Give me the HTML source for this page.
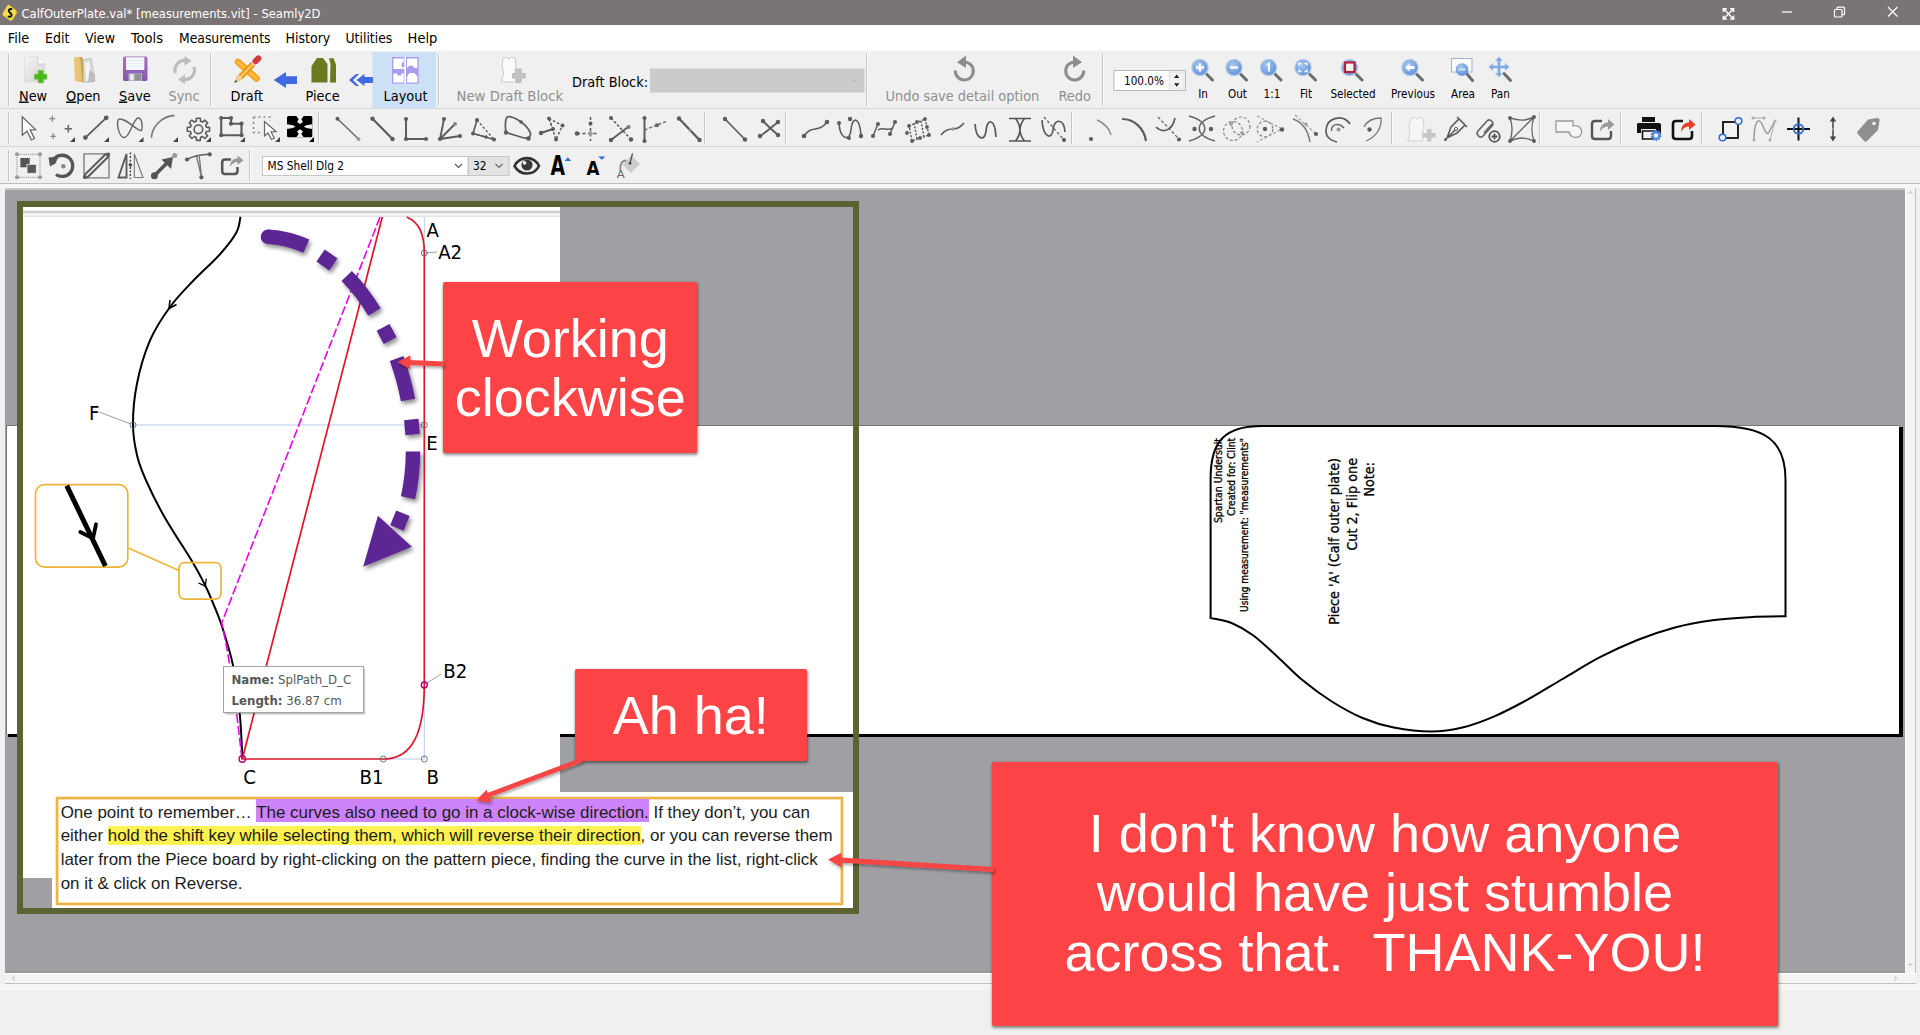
<!DOCTYPE html>
<html lang="en">
<head>
<meta charset="utf-8">
<title>CalfOuterPlate.val* [measurements.vit] - Seamly2D</title>
<style>
*{box-sizing:border-box;margin:0;padding:0}
html,body{width:1920px;height:1035px;overflow:hidden;background:#f0f0f0;font-family:"DejaVu Sans Condensed","DejaVu Sans","Liberation Sans",sans-serif;color:#000}
.abs{position:absolute}
#titlebar{position:absolute;left:0;top:0;width:1920px;height:25px;background:#7a7574;color:#fff;font-size:14px}
#menubar{position:absolute;left:0;top:25px;width:1920px;height:25px;background:#fff;font-size:13.5px}
#tb1{position:absolute;left:0;top:50px;width:1920px;height:59px;background:#f0f0f0;border-bottom:1px solid #d6d6d6}
#tb2{position:absolute;left:0;top:109px;width:1920px;height:38px;background:#f0f0f0;border-bottom:1px solid #d6d6d6}
#tb3{position:absolute;left:0;top:147px;width:1920px;height:37px;background:#f0f0f0;border-bottom:1px solid #bdbdbd}
#canvas{position:absolute;left:5px;top:188px;width:1900px;height:785px;background:#a0a0a4;overflow:hidden;border-top:2px solid #c6c6c6;border-bottom:2px solid #97979b}
.red{position:absolute;background:#fc4345;color:#fff;font-family:"Liberation Sans",sans-serif;font-size:54px;text-align:center;white-space:nowrap;border-radius:2px;box-shadow:0.5px 1.5px 3px rgba(0,0,0,.45)}
#status{position:absolute;left:0;top:984px;width:1920px;height:51px;background:linear-gradient(#f5f5f5 0,#f5f5f5 6px,#f0f0f0 6px)}
</style>
</head>
<body>
<div id="titlebar"></div>
<div id="menubar"></div>
<div id="tb1"></div>
<div class="abs" style="left:0;top:50px;width:1920px;height:1px;background:#fafafa"></div>
<div id="tb2"></div>
<div id="tb3"></div>
<div class="abs" style="left:0;top:184px;width:1920px;height:4px;background:#f5f5f5"></div>
<div id="canvas"></div>
<!-- vertical & horizontal scrollbars -->
<div class="abs" style="left:1905px;top:188px;width:11px;height:796px;background:#f4f4f4;border-left:1px solid #fff;border-right:1px solid #c0c0c0"></div>
<div class="abs" style="left:5px;top:973px;width:1911px;height:11px;background:#f4f4f4;border-top:1px solid #fff;border-bottom:1px solid #c0c0c0"></div>
<div class="abs" style="left:0;top:984px;width:1920px;height:6px;background:#f5f5f5"></div>
<!-- paper -->
<div class="abs" style="left:8px;top:427px;width:1895px;height:310px;background:#000"></div>
<div class="abs" style="left:6px;top:425px;width:1893px;height:309px;background:#fff;border-left:1px solid #777;border-top:1px solid #777"></div>
<!-- olive frame content -->
<div class="abs" style="left:23px;top:207px;width:537.4px;height:585px;background:#fff"></div>
<div class="abs" style="left:23px;top:207px;width:537.4px;height:10px;background:#f1f1f1;border-top:3px solid #fff;border-bottom:1px solid #e4e4e4"><div style="height:2px;background:#cfcfcf;margin-top:1px"></div></div>
<div class="abs" style="left:23px;top:792px;width:830px;height:116px;background:#fff"></div>
<div class="abs" style="left:23px;top:878px;width:29px;height:30px;background:#a0a0a4"></div>
<div class="abs" style="left:17px;top:201px;width:842px;height:713px;border:6.5px solid #5b6333"></div>
<div id="status"></div>
<!-- text box -->
<div class="abs" id="tbox" style="left:55.5px;top:797px;width:787.5px;height:107.5px;border:2px solid #ecb545;box-shadow:0 0 0 1px #f7dfa8 inset,0 0 1.5px #e0a530;background:#fff;font-family:'Liberation Sans',sans-serif;font-size:16.94px;line-height:23.55px;color:#1c1c1c;padding:1.9px 0 0 3.2px;white-space:nowrap">One point to remember… <span style="background:#cc83fb;padding-top:3.6px">The curves also need to go in a clock-wise direction.</span> If they don’t, you can<br>either <span style="background:#fdf251">hold the shift key while selecting them, which will reverse their direction</span>, or you can reverse them<br>later from the Piece board by right-clicking on the pattern piece, finding the curve in the list, right-click<br>on it &amp; click on Reverse.</div>
<!-- red callouts -->
<div class="red" style="left:443.3px;top:282.3px;width:254px;height:171.2px;padding-top:26.3px;line-height:59.2px">Working<br>clockwise</div>
<div class="red" style="left:575px;top:669.2px;width:231.5px;height:92.3px;padding-top:16.8px;line-height:59.4px">Ah ha!</div>
<div class="red" style="left:992.3px;top:762px;width:785.4px;height:264px;padding-top:41.8px;line-height:59.4px">I don't know how anyone<br>would have just stumble<br>across that.&nbsp; THANK-YOU!</div>
<svg class="abs" id="draw" style="left:0;top:0" width="1920" height="1035" viewBox="0 0 1920 1035">
<defs>
<filter id="sh2" x="-10%" y="-30%" width="125%" height="170%"><feGaussianBlur in="SourceAlpha" stdDeviation="1.6"/><feOffset dx="1" dy="2"/><feComponentTransfer><feFuncA type="linear" slope="0.35"/></feComponentTransfer><feMerge><feMergeNode/><feMergeNode in="SourceGraphic"/></feMerge></filter>
<filter id="sh" x="-10%" y="-10%" width="125%" height="130%"><feGaussianBlur in="SourceAlpha" stdDeviation="2.2"/><feOffset dx="1.5" dy="2.5"/><feComponentTransfer><feFuncA type="linear" slope="0.45"/></feComponentTransfer><feMerge><feMergeNode/><feMergeNode in="SourceGraphic"/></feMerge></filter>
</defs>
<path d="M14.5 975.500 L11.500 978.500 L14.500 981.500 Z M1894.500 975.500 L1897.500 978.500 L1894.500 981.500 Z M1907.500 193.500 L1910.500 190.500 L1913.500 193.500 Z M1907.500 963.500 L1910.500 966.500 L1913.500 963.500 Z" fill="#d0d0d0"/>
<g font-family="'DejaVu Sans Condensed','DejaVu Sans','Liberation Sans',sans-serif" lengthAdjust="spacingAndGlyphs">
<text x="21.5" y="17.9" font-size="12.9" fill="#fff" textLength="299" lengthAdjust="spacingAndGlyphs">CalfOuterPlate.val* [measurements.vit] - Seamly2D</text>
<g font-size="13.9" fill="#000">
<text x="7.8" y="42.6" textLength="21.5" lengthAdjust="spacingAndGlyphs">File</text><text x="45" y="42.6" textLength="24.3" lengthAdjust="spacingAndGlyphs">Edit</text><text x="85" y="42.6" textLength="30" lengthAdjust="spacingAndGlyphs">View</text><text x="131" y="42.6" textLength="32" lengthAdjust="spacingAndGlyphs">Tools</text><text x="179" y="42.6" textLength="91.5" lengthAdjust="spacingAndGlyphs">Measurements</text><text x="285.5" y="42.6" textLength="44.8" lengthAdjust="spacingAndGlyphs">History</text><text x="345.5" y="42.6" textLength="46.8" lengthAdjust="spacingAndGlyphs">Utilities</text><text x="407.6" y="42.6" textLength="29.8" lengthAdjust="spacingAndGlyphs">Help</text>
</g></g>
<!-- title bar icons -->
<g id="tbi">
<path d="M9 5 L16 10.5 C17 11.5 16.800 12.500 16.300 13.500 L12.500 19.500 C11.800 20.500 10.800 20.800 9.800 20.200 L3.300 15.500 C2.500 14.800 2.500 13.800 3.200 12.800 L7.300 5.800 C7.800 5 8.400 4.700 9 5 Z" fill="#f2dc4a" stroke="#e6c72e" stroke-width="0.600"/>
<path d="M12.200 9.500 C10.500 8.500 8.600 9.300 8.800 11 C9 12.600 11.800 13.200 11.600 15.200 C11.400 16.800 9.300 17.300 7.800 16.200" fill="none" stroke="#111" stroke-width="2"/>
<g stroke="#fff" fill="none" stroke-width="1.200">
<path d="M1724 9.300 L1733 18.500 M1733 9.300 L1724 18.500" stroke-width="1.300"/>
<path d="M1723.500 12 V8.800 H1726.700 M1730.300 8.800 H1733.500 V12 M1733.500 15.800 V19 H1730.300 M1726.700 19 H1723.500 V15.800" stroke-width="1.700"/>
<path d="M1782 12 H1792"/>
<rect x="1834.500" y="9.500" width="7.500" height="7.500" rx="1"/><path d="M1837 9.500 V8.200 C1837 7.600 1837.400 7.200 1838 7.200 H1843.500 C1844.100 7.200 1844.500 7.600 1844.500 8.200 V13.700 C1844.500 14.300 1844.100 14.700 1843.500 14.700 H1842"/>
<path d="M1888 7 L1897.500 16.500 M1897.500 7 L1888 16.500" stroke-width="1.300"/>
</g>
</g>
<!-- ===== toolbar 1 ===== -->
<defs>
<linearGradient id="gpage" x1="0" y1="0" x2="1" y2="1"><stop offset="0" stop-color="#f6f6f6"/><stop offset="1" stop-color="#cfcfcf"/></linearGradient>
<linearGradient id="gsave" x1="0" y1="0" x2="0" y2="1"><stop offset="0" stop-color="#a373c7"/><stop offset="1" stop-color="#8a55b3"/></linearGradient>
<radialGradient id="glens" cx="0.4" cy="0.35" r="0.7"><stop offset="0" stop-color="#a9c8ef"/><stop offset="1" stop-color="#5b8fd6"/></radialGradient>
<g id="mag"><path d="M6 6 L12.5 12.5" stroke="#6b6b6b" stroke-width="3" stroke-linecap="round"/><circle cx="0" cy="0" r="8.2" fill="url(#glens)" stroke="#b9cde8" stroke-width="1.2"/></g>
</defs>
<rect x="372.5" y="52" width="63.5" height="56.5" fill="#cce0f6"/>
<g stroke="#c4c4c4" stroke-width="1"><path d="M8.5 54 V106"/><path d="M210.5 54 V106"/><path d="M438.5 54 V106"/><path d="M866.5 54 V106"/><path d="M1102.5 54 V106"/></g>
<g stroke="#fbfbfb" stroke-width="1"><path d="M9.5 54 V106"/><path d="M211.5 54 V106"/><path d="M439.5 54 V106"/><path d="M867.5 54 V106"/><path d="M1103.5 54 V106"/></g>
<!-- New -->
<path d="M24.5 57 H38 L45 64 V82 H24.5 Z" fill="url(#gpage)" stroke="#dcdcdc" stroke-width="0.8"/><path d="M38 57 V64 H45" fill="#fafafa" stroke="#c4c4c4" stroke-width="0.8"/>
<path d="M38.3 70.6 h4.8 v3.7 h3.7 v4.8 h-3.7 v3.7 h-4.8 v-3.7 h-3.7 v-4.8 h3.7 z" fill="#4ab51d" stroke="#62c832" stroke-width="0.9" stroke-linejoin="round"/>
<!-- Open -->
<path d="M74 57.5 L80 56.5 L82 82.5 L75 81 Z" fill="#e9c272"/><path d="M80 56.5 L83 58 L83.5 82 L82 82.5 Z" fill="#c9a24e"/>
<path d="M83 60 L91 58 L95 81 L84 82.5 Z" fill="#dadada" stroke="#b5b5b5" stroke-width="0.7"/><path d="M85 63 L89 62 L92 80 L86 81 Z" fill="#f4f4f4"/><path d="M89.5 70 L95 74 L95 82 L88 82.5 Z" fill="#bdbdbd"/>
<!-- Save -->
<rect x="123" y="56.5" width="24.5" height="24.5" rx="1.6" fill="url(#gsave)"/><rect x="126" y="57.3" width="18.3" height="12.7" fill="#f4f7fb"/><path d="M126 60.5 h18.3 M126 63.5 h18.3 M126 66.5 h18.3" stroke="#dfe7f1" stroke-width="0.7"/>
<rect x="128.5" y="73.3" width="13.5" height="7.7" fill="#b9b4c2"/><rect x="130.3" y="74.3" width="3" height="5.7" fill="#f2eef6"/><rect x="135" y="74" width="6" height="6.5" fill="#8f8f8f"/>
<!-- Sync -->
<g fill="none" stroke="#bdbdbd" stroke-width="3.2"><path d="M175.5 73 A9.6 9.6 0 0 1 186 60.5"/><path d="M194 67 A9.6 9.6 0 0 1 183.5 79.5"/></g>
<path d="M184.5 56 L191.5 61 L184.5 65.5 Z" fill="#bdbdbd"/><path d="M185 74.5 L178 79.5 L185 84 Z" fill="#bdbdbd"/>
<!-- Draft -->
<g stroke-linecap="round"><path d="M238 62 L256.5 78.5" stroke="#f5a623" stroke-width="6.8"/><path d="M238 62 L256.5 78.5" stroke="#ffc04a" stroke-width="3" opacity=".7"/>
<path d="M240.5 77 L253 64" stroke="#e8931c" stroke-width="6" stroke-linecap="butt"/><path d="M240.5 77 L253 64" stroke="#ffc85e" stroke-width="2.4" stroke-linecap="butt"/></g>
<path d="M253 64 L257 59.8" stroke="#d9d9d9" stroke-width="6"/><path d="M255.6 61.2 L258.4 58.4" stroke="#d4373c" stroke-width="6" stroke-linecap="round"/>
<path d="M234.5 83 L236.5 75 L242.8 79.8 Z" fill="#eec99a"/><path d="M234.5 83 L235.3 80 L237.6 81.6 Z" fill="#4a4a4a"/>
<!-- arrows -->
<path d="M273.7 80 L286 72 V76.3 H297 V84 H286 V88 Z" fill="#4169e1"/>
<path d="M349 80 L356 74 H359 L353 80 L359 86 H356 Z" fill="#4169e1"/><path d="M356.5 80 L364.5 74 V77 H373 V83 H364.5 V86 Z" fill="#4169e1"/>
<!-- Piece -->
<path d="M311.5 82.5 V66 L317 58 H323 L327.5 64 V82.5 Z" fill="#6b7a1f"/><path d="M330 82.5 L330.5 64 L329 58.3 H333.5 L336 64.5 V82.5 Z" fill="#6b7a1f"/>
<!-- Layout -->
<rect x="392" y="57" width="26.7" height="26.7" fill="#a99cf0"/>
<g fill="#fff"><path d="M393.3 58.5 h10.4 v4 h-2 v4.5 h2 v2 h-10.4 z"/><path d="M393.3 73.5 h4 v2 h4 v-2 h2.4 v9 h-10.4 z"/><path d="M407 58.5 h10.4 v9.5 h-3 l-2 -2.2 h-3 l-2.4 2.2 z"/><path d="M407 82.5 v-6 l2.6 -3.5 h5 l2.8 3.5 v6 z"/></g>
<rect x="404.3" y="57" width="1.7" height="26.7" fill="#fff"/>
<!-- New Draft Block -->
<path d="M503 58 L506.5 57.3 L509 59 L511.5 57.3 L515 58 L516 66 L514.5 74 L516 82 H501.5 L503.5 73 L502 66 Z" fill="#fbfbfb" stroke="#c9c9c9" stroke-width="1"/>
<path d="M516.5 69 h4.6 v4.5 h4 v4.6 h-4 v4.5 h-4.6 v-4.5 h-4 v-4.6 h4 z" fill="#c4c4c4" stroke="#adadad" stroke-width="0.7"/>
<!-- combo -->
<rect x="650" y="68.5" width="214.5" height="24" fill="#cbcbcb"/><path d="M850.5 78.5 l3.5 3.5 l3.5 -3.5" fill="none" stroke="#bdbdbd" stroke-width="1.1"/>
<!-- undo / redo -->
<g fill="none" stroke="#8d8d8d" stroke-width="3"><path d="M963.5 62 A9 9 0 1 1 955.3 70.5"/><path d="M1075.5 62 A9 9 0 1 0 1083.7 70.5"/></g>
<path d="M966 55.5 V68 L957 62.2 Z" fill="#8d8d8d"/><path d="M1073 55.5 V68 L1082 62.2 Z" fill="#8d8d8d"/>
<!-- spinbox -->
<rect x="1114" y="70.5" width="71.5" height="20" fill="#fff" stroke="#b9b9b9" stroke-width="1"/><rect x="1169.5" y="72" width="14.5" height="17" fill="#f3f3f3" stroke="#dcdcdc" stroke-width="0.8"/>
<path d="M1174 78 l2.7 -3.4 l2.7 3.4 z M1174 83.3 l2.7 3.4 l2.7 -3.4 z" fill="#222"/>
<!-- zoom icons -->
<use href="#mag" x="1200" y="67.5"/><path d="M1196 67.5 h8 M1200 63.5 v8" stroke="#fff" stroke-width="2.4"/>
<use href="#mag" x="1234" y="67.5"/><path d="M1230 67.5 h8" stroke="#fff" stroke-width="2.4"/>
<use href="#mag" x="1268.5" y="67.5"/><path d="M1267 65 l2 -1.5 v8" stroke="#fff" stroke-width="1.8" fill="none"/>
<use href="#mag" x="1303" y="67.5"/><path d="M1299 65.5 v-2 h2.5 M1304.5 63.5 h2.500 v2 M1307 69.500 v2 h-2.500 M1301.500 71.500 h-2.500 v-2" stroke="#fff" stroke-width="1.4" fill="none"/>
<use href="#mag" x="1349.500" y="67.5"/><rect x="1345" y="62.500" width="9.500" height="9.500" fill="#f4f4f4" stroke="#b0213c" stroke-width="2.200"/>
<use href="#mag" x="1410" y="67.5"/><path d="M1405 67.500 l4.500 -4 v2.500 h5 v3 h-5 v2.500 z" fill="#fff"/>
<rect x="1451.500" y="58.500" width="20.500" height="13.500" fill="#fafafa" stroke="#9fb4d2" stroke-width="1"/><path d="M1467 74 L1472.500 80.500" stroke="#6b6b6b" stroke-width="3" stroke-linecap="round"/><circle cx="1462" cy="69.500" r="6.300" fill="url(#glens)"/><path d="M1458.500 69.500 h7" stroke="#dfeaf8" stroke-width="1.600"/>
<path d="M1504 73.500 L1510.500 80.500" stroke="#6b6b6b" stroke-width="3" stroke-linecap="round"/><path d="M1499 56.500 l4 4.500 h-2.600 v4.500 h4.600 v-2.600 l4.500 4 l-4.500 4 v-2.600 h-4.600 v4.600 h2.600 l-4 4.500 l-4 -4.500 h2.600 v-4.600 h-4.600 v2.600 l-4.500 -4 l4.500 -4 v2.600 h4.600 v-4.500 h-2.600 z" fill="#7ea6e0" stroke="#c8d9f2" stroke-width="0.800"/>
<!-- labels -->
<g font-family="'DejaVu Sans Condensed','DejaVu Sans','Liberation Sans',sans-serif" font-size="14.4" fill="#000">
<text x="19" y="100.5" textLength="28.2" lengthAdjust="spacingAndGlyphs"><tspan text-decoration="underline">N</tspan>ew</text><text x="66" y="100.5" textLength="34.6" lengthAdjust="spacingAndGlyphs"><tspan text-decoration="underline">O</tspan>pen</text><text x="119" y="100.5" textLength="31.8" lengthAdjust="spacingAndGlyphs"><tspan text-decoration="underline">S</tspan>ave</text><text x="168.500" y="100.5" fill="#8f8f8f" textLength="31.2" lengthAdjust="spacingAndGlyphs">Sync</text>
<text x="230.500" y="100.5" textLength="32.6" lengthAdjust="spacingAndGlyphs">Draft</text><text x="305.500" y="100.5" textLength="34.2" lengthAdjust="spacingAndGlyphs">Piece</text><text x="383.500" y="101.200" textLength="44.0" lengthAdjust="spacingAndGlyphs">Layout</text>
<text x="456.500" y="101" fill="#8f8f8f" font-size="14.75" textLength="106.7" lengthAdjust="spacingAndGlyphs">New Draft Block</text><text x="572" y="86.500" textLength="76.1" lengthAdjust="spacingAndGlyphs">Draft Block:</text>
<text x="885.500" y="101" fill="#8f8f8f" textLength="153.8" lengthAdjust="spacingAndGlyphs">Undo save detail option</text><text x="1058.500" y="101" fill="#8f8f8f" textLength="32.5" lengthAdjust="spacingAndGlyphs">Redo</text>
</g>
<g font-family="'DejaVu Sans Condensed','DejaVu Sans','Liberation Sans',sans-serif" font-size="11.600" fill="#000" text-anchor="middle">
<text x="1144" y="85" textLength="39.8" lengthAdjust="spacingAndGlyphs">100.0%</text>
<text x="1203" y="98.300" textLength="9.7" lengthAdjust="spacingAndGlyphs">In</text><text x="1237.500" y="98.300" textLength="18.9" lengthAdjust="spacingAndGlyphs">Out</text><text x="1272" y="98.300" textLength="16.8" lengthAdjust="spacingAndGlyphs">1:1</text><text x="1306" y="98.300" textLength="12.2" lengthAdjust="spacingAndGlyphs">Fit</text><text x="1353" y="98.300" textLength="45.2" lengthAdjust="spacingAndGlyphs">Selected</text><text x="1413" y="98.300" textLength="44.0" lengthAdjust="spacingAndGlyphs">Previous</text><text x="1463" y="98.300" textLength="24.0" lengthAdjust="spacingAndGlyphs">Area</text><text x="1500.500" y="98.300" textLength="18.8" lengthAdjust="spacingAndGlyphs">Pan</text>
</g>
<!-- ===== toolbar 2 ===== -->
<g id="tb2i">
<path d="M8.5 112 V144" stroke="#c6c6c6" stroke-width="1"/><path d="M9.5 112 V144" stroke="#fbfbfb" stroke-width="1"/>
<path d="M318.5 112 V144" stroke="#c6c6c6" stroke-width="1"/><path d="M319.5 112 V144" stroke="#fbfbfb" stroke-width="1"/>
<path d="M704.5 112 V144" stroke="#c6c6c6" stroke-width="1"/><path d="M705.5 112 V144" stroke="#fbfbfb" stroke-width="1"/>
<path d="M785.5 112 V144" stroke="#c6c6c6" stroke-width="1"/><path d="M786.5 112 V144" stroke="#fbfbfb" stroke-width="1"/>
<path d="M1071.5 112 V144" stroke="#c6c6c6" stroke-width="1"/><path d="M1072.5 112 V144" stroke="#fbfbfb" stroke-width="1"/>
<path d="M1391.5 112 V144" stroke="#c6c6c6" stroke-width="1"/><path d="M1392.5 112 V144" stroke="#fbfbfb" stroke-width="1"/>
<path d="M1539.5 112 V144" stroke="#c6c6c6" stroke-width="1"/><path d="M1540.5 112 V144" stroke="#fbfbfb" stroke-width="1"/>
<path d="M1620.5 112 V144" stroke="#c6c6c6" stroke-width="1"/><path d="M1621.5 112 V144" stroke="#fbfbfb" stroke-width="1"/>
<path d="M1701.5 112 V144" stroke="#c6c6c6" stroke-width="1"/><path d="M1702.5 112 V144" stroke="#fbfbfb" stroke-width="1"/>
<path d="M22.3 116.8 V135.2 L27 131 L31.3 140 L34.4 138.5 L30.2 129.8 L35.6 129.6 Z" stroke="#666" stroke-width="1.3" fill="#fff"/>
<path d="M49.3 118.8 h6 M52.3 115.8 v6" stroke="#777" stroke-width="1.1" fill="none"/>
<path d="M64.6 128.8 h7.4 M68.3 125.1 v7.4" stroke="#666" stroke-width="1.6" fill="none"/>
<path d="M50.2 136.3 h6 M53.2 133.3 v6" stroke="#777" stroke-width="1.1" fill="none"/>
<path d="M75 142 h-5 l5 -5 z" fill="#444"/>
<path d="M85.4 137.6 L106.2 117.8" stroke="#5c5c5c" stroke-width="1.8" fill="none"/>
<circle cx="85.4" cy="137.6" r="2.4" fill="#5c5c5c"/>
<circle cx="106.2" cy="117.8" r="2.4" fill="#5c5c5c"/>
<path d="M109 142 h-5 l5 -5 z" fill="#444"/>
<path d="M118.3 119.5 C116 126 120 138 124.5 137.5 C130 137 133 119 138 118 C142 117.5 143 127 141.5 130.5 C138 132 124 116 118.3 119.5 Z" stroke="#666" stroke-width="1.4" fill="none"/>
<path d="M143.5 142 h-5 l5 -5 z" fill="#444"/>
<path d="M151.4 137.7 C152 127 161 116.5 174.6 115.4" stroke="#777" stroke-width="1.6" fill="none"/>
<path d="M178 142 h-5 l5 -5 z" fill="#444"/>
<path d="M196.2 121.3 L196.5 118.2 L200.3 118.2 L200.6 121.3 L202.5 122.1 L204.9 120.1 L207.6 122.8 L205.6 125.2 L206.4 127.1 L209.5 127.4 L209.5 131.2 L206.4 131.5 L205.6 133.4 L207.6 135.8 L204.9 138.5 L202.5 136.5 L200.6 137.3 L200.3 140.4 L196.5 140.4 L196.2 137.3 L194.3 136.5 L191.9 138.5 L189.2 135.8 L191.2 133.4 L190.4 131.5 L187.3 131.2 L187.3 127.4 L190.4 127.1 L191.2 125.2 L189.2 122.8 L191.9 120.1 L194.3 122.1 Z" stroke="#5c5c5c" stroke-width="1.6" fill="none" stroke-linejoin="round"/>
<circle cx="198.4" cy="129.3" r="4.3" fill="none" stroke="#5c5c5c" stroke-width="1.6"/>
<path d="M211 142 h-5 l5 -5 z" fill="#444"/>
<path d="M221.2 118 H231 V123.7 H241.5 V135.2 H221.2 Z" stroke="#5c5c5c" stroke-width="2.1" fill="none"/>
<circle cx="221.2" cy="118" r="2.1" fill="#5c5c5c"/>
<circle cx="231" cy="118" r="2.1" fill="#5c5c5c"/>
<circle cx="231" cy="123.7" r="2.1" fill="#5c5c5c"/>
<circle cx="241.5" cy="123.7" r="2.1" fill="#5c5c5c"/>
<circle cx="241.5" cy="135.2" r="2.1" fill="#5c5c5c"/>
<circle cx="221.2" cy="135.2" r="2.1" fill="#5c5c5c"/>
<path d="M245 142 h-5 l5 -5 z" fill="#444"/>
<path d="M253.5 117 H270 V121 M253.5 117 V132.5 H262" stroke="#888" stroke-width="1.5" fill="none" stroke-dasharray="2 3"/>
<path d="M264.5 121.5 V136 L268 133 L271.5 139.5 L274.3 138 L271 131.8 L276 131.5 Z" stroke="#666" stroke-width="1.2" fill="#fff"/>
<path d="M280 142 h-5 l5 -5 z" fill="#444"/>
<rect x="287" y="116" width="25.3" height="21.2" rx="1.5" fill="#000"/>
<path d="M296.3 116 H303.7 L301.3 119.3 L303 122 L300 124 L297 122 L298.7 119.3 Z M296.3 137.2 H303.7 L301.3 133.900 L303 131.200 L300 129.200 L297 131.200 L298.700 133.900 Z M287 124.300 L293 125.300 L295.500 126.600 L293 127.900 L287 128.900 Z M312.300 124.300 L306.300 125.300 L303.800 126.600 L306.300 127.900 L312.300 128.900 Z" fill="#f0f0f0"/>
<path d="M314 142 h-5 l5 -5 z" fill="#000"/>
<path d="M337.5 118.8 L358.5 139" stroke="#666" stroke-width="1.4" fill="none"/>
<circle cx="337.5" cy="118.8" r="2" fill="#5c5c5c"/>
<circle cx="358.5" cy="139" r="2" fill="#999"/>
<path d="M372.5 118.8 L392.5 139" stroke="#5c5c5c" stroke-width="2.2" fill="none"/>
<circle cx="372.5" cy="118.8" r="2.2" fill="#5c5c5c"/>
<circle cx="392.5" cy="139" r="2.2" fill="#5c5c5c"/>
<path d="M406 119 V139 H426" stroke="#5c5c5c" stroke-width="2" fill="none"/>
<circle cx="406" cy="119" r="2.1" fill="#5c5c5c"/>
<circle cx="406" cy="139" r="2.1" fill="#5c5c5c"/>
<circle cx="426" cy="139" r="2.1" fill="#5c5c5c"/>
<path d="M444 119 L440 139 L460 136 M440 139 L455 124" stroke="#5c5c5c" stroke-width="1.9" fill="none"/>
<circle cx="444" cy="119" r="2.1" fill="#5c5c5c"/>
<circle cx="440" cy="139" r="2.1" fill="#5c5c5c"/>
<circle cx="460" cy="136" r="2.1" fill="#5c5c5c"/>
<circle cx="455" cy="124" r="2" fill="#888"/>
<path d="M477 120 L473 133.500 L494 139.500" stroke="#5c5c5c" stroke-width="1.7" fill="none"/>
<path d="M477 120 L494 139.500 M473 133.500 L486 137" stroke="#555" stroke-width="1.3" fill="none" stroke-dasharray="2.5 2"/>
<circle cx="477" cy="120" r="2" fill="#5c5c5c"/>
<circle cx="473" cy="133.5" r="2" fill="#5c5c5c"/>
<circle cx="494" cy="139.5" r="2" fill="#5c5c5c"/>
<circle cx="486" cy="137" r="1.8" fill="#5c5c5c"/>
<path d="M507 117 C511 115 525 122 530 132 C532 136 528 139 524 138 L506 132.500 C505 126 505 120 507 117 Z" stroke="#5c5c5c" stroke-width="1.7" fill="none"/>
<circle cx="506" cy="132.5" r="2.2" fill="#5c5c5c"/>
<circle cx="528.5" cy="138.5" r="2.2" fill="#5c5c5c"/>
<circle cx="521" cy="122" r="1.8" fill="#5c5c5c"/>
<path d="M541 133 L553 129" stroke="#5c5c5c" stroke-width="2" fill="none"/>
<path d="M549 118.500 L562.500 125.500 L556 139.500 Z M549 118.5 L553 129" stroke="#555" stroke-width="1.4" fill="none" stroke-dasharray="2.5 2"/>
<circle cx="541" cy="133" r="2.2" fill="#5c5c5c"/>
<circle cx="553" cy="129" r="2" fill="#5c5c5c"/>
<circle cx="549" cy="118.5" r="2" fill="#5c5c5c"/>
<circle cx="562.5" cy="125.5" r="2" fill="#5c5c5c"/>
<circle cx="556" cy="139.5" r="2" fill="#5c5c5c"/>
<path d="M577 133.500 H597 M590.500 117 V141" stroke="#555" stroke-width="1.5" fill="none" stroke-dasharray="3 2.5"/>
<circle cx="577" cy="133.5" r="2.3" fill="#5c5c5c"/>
<circle cx="590.5" cy="123.5" r="2" fill="#5c5c5c"/>
<circle cx="590.5" cy="133.5" r="2.2" fill="#999"/>
<path d="M628 127 L611 140" stroke="#5c5c5c" stroke-width="1.8" fill="none"/>
<path d="M611 118 L631 139.500" stroke="#555" stroke-width="1.5" fill="none" stroke-dasharray="2.5 2"/>
<circle cx="611" cy="118" r="2" fill="#5c5c5c"/>
<circle cx="631" cy="139.5" r="2.2" fill="#5c5c5c"/>
<circle cx="611" cy="140" r="2.2" fill="#5c5c5c"/>
<circle cx="628.5" cy="127" r="2" fill="#777"/>
<path d="M644.500 118 V141" stroke="#5c5c5c" stroke-width="2" fill="none"/>
<path d="M644.500 130 L666 121.500" stroke="#666" stroke-width="1.4" fill="none" stroke-dasharray="3 2"/>
<circle cx="644.5" cy="118" r="2.1" fill="#5c5c5c"/>
<circle cx="644.5" cy="141" r="2.1" fill="#5c5c5c"/>
<circle cx="657" cy="125.2" r="2" fill="#666"/>
<path d="M679 118.5 L699.5 140" stroke="#5c5c5c" stroke-width="2.3" fill="none"/>
<circle cx="679" cy="118.5" r="2.2" fill="#5c5c5c"/>
<circle cx="699.5" cy="140" r="2.2" fill="#5c5c5c"/>
<circle cx="690" cy="130" r="1.5" fill="#999"/>
<path d="M725 119 L745 139.5" stroke="#5c5c5c" stroke-width="1.7" fill="none"/>
<circle cx="725" cy="119" r="2.2" fill="#5c5c5c"/>
<circle cx="745" cy="139.5" r="2.2" fill="#5c5c5c"/>
<path d="M760 136 C768 131 773 126 778 122 M763 121 C769 127 773 131 778 135" stroke="#5c5c5c" stroke-width="1.9" fill="none"/>
<circle cx="760" cy="136" r="2.2" fill="#5c5c5c"/>
<circle cx="778" cy="122" r="2.2" fill="#5c5c5c"/>
<circle cx="763" cy="121" r="2.2" fill="#5c5c5c"/>
<circle cx="778" cy="135" r="2.2" fill="#5c5c5c"/>
<path d="M804 136 C812 124 818 134 827 122" stroke="#5c5c5c" stroke-width="1.6" fill="none"/>
<circle cx="804" cy="136" r="2.3" fill="#5c5c5c"/>
<circle cx="827" cy="122" r="2.3" fill="#5c5c5c"/>
<path d="M839 123 C840 140 850 142 851 130 C852 116 860 116 861 136" stroke="#5c5c5c" stroke-width="1.6" fill="none"/>
<circle cx="839" cy="123" r="2" fill="#5c5c5c"/>
<circle cx="850" cy="119" r="2.2" fill="#5c5c5c"/>
<circle cx="849" cy="138" r="2" fill="#5c5c5c"/>
<circle cx="861" cy="136" r="2.2" fill="#5c5c5c"/>
<path d="M873 136 L878 124 M890 134 L895 122 M878 130 C884 126 886 132 893 128" stroke="#5c5c5c" stroke-width="1.5" fill="none"/>
<circle cx="873" cy="136" r="2.1" fill="#5c5c5c"/>
<circle cx="878" cy="124" r="2" fill="#5c5c5c"/>
<circle cx="890" cy="134" r="2.1" fill="#5c5c5c"/>
<circle cx="895" cy="122" r="2.1" fill="#5c5c5c"/>
<path d="M909 126 L925 119 L929 135 L912 141 Z M914 123 L917 139 M921 121 L924 137" stroke="#555" stroke-width="1.4" fill="none" stroke-dasharray="2 1.5"/>
<circle cx="909" cy="126" r="1.9" fill="#5c5c5c"/>
<circle cx="925" cy="119" r="1.9" fill="#5c5c5c"/>
<circle cx="929" cy="135" r="1.9" fill="#5c5c5c"/>
<circle cx="912" cy="141" r="1.9" fill="#5c5c5c"/>
<circle cx="907" cy="133" r="1.9" fill="#5c5c5c"/>
<circle cx="917" cy="122" r="1.9" fill="#5c5c5c"/>
<circle cx="927" cy="127" r="1.9" fill="#5c5c5c"/>
<circle cx="920" cy="138" r="1.9" fill="#5c5c5c"/>
<path d="M941 135 C950 124 955 134 964 123" stroke="#5c5c5c" stroke-width="1.7" fill="none"/>
<circle cx="953" cy="129" r="1.7" fill="#999"/>
<path d="M975 124 C976 140 985 142 986 131 C987 118 995 118 996 137" stroke="#5c5c5c" stroke-width="1.8" fill="none"/>
<path d="M1009 118.500 H1031 M1009 141 H1031 M1015.500 118.500 C1021.500 126 1021.500 133.500 1015.500 141 M1024.500 118.500 C1018.500 126 1018.500 133.500 1024.500 141" stroke="#555" stroke-width="1.6" fill="none"/>
<path d="M1042 120 C1043 138 1052 140 1053 130 C1054 118 1064 118 1065 132" stroke="#5c5c5c" stroke-width="1.7" fill="none"/>
<path d="M1044 117 L1064 140" stroke="#666" stroke-width="1.3" fill="none" stroke-dasharray="3 2"/>
<circle cx="1064" cy="140" r="2" fill="#555"/>
<circle cx="1091" cy="139" r="2.1" fill="#5c5c5c"/>
<path d="M1097 120 C1104 123 1109 128 1111 135" stroke="#888" stroke-width="1.4" fill="none"/>
<path d="M1122 119 C1134 119 1144 128 1146 141" stroke="#5c5c5c" stroke-width="2.2" fill="none"/>
<path d="M1156 127 C1162 133 1172 132 1175 118" stroke="#5c5c5c" stroke-width="1.7" fill="none"/>
<path d="M1158 117 L1179 139" stroke="#666" stroke-width="1.3" fill="none" stroke-dasharray="3 2"/>
<circle cx="1179" cy="139.5" r="2.1" fill="#5c5c5c"/>
<path d="M1189 116 C1210 122 1210 135 1189 141 M1215 116 C1194 122 1194 135 1215 141" stroke="#666" stroke-width="1.5" fill="none"/>
<circle cx="1194.5" cy="129" r="2.2" fill="#5c5c5c"/>
<circle cx="1211" cy="129" r="2.2" fill="#5c5c5c"/>
<circle cx="1233" cy="131" r="9.500" fill="none" stroke="#888" stroke-width="1.200" stroke-dasharray="3 2"/><circle cx="1241" cy="126" r="9" fill="none" stroke="#888" stroke-width="1.200" stroke-dasharray="3 2"/>
<circle cx="1231" cy="124" r="1.8" fill="#999"/>
<circle cx="1242" cy="133" r="1.8" fill="#999"/>
<circle cx="1265" cy="129" r="7.800" fill="none" stroke="#888" stroke-width="1.200" stroke-dasharray="3 2"/>
<path d="M1257 116 L1282 129 L1257 142" stroke="#999" stroke-width="1.1" fill="none" stroke-dasharray="3 2"/>
<circle cx="1265" cy="129" r="2.2" fill="#5c5c5c"/>
<circle cx="1282" cy="129.5" r="2.2" fill="#5c5c5c"/>
<path d="M1293 119 C1302 122 1308 130 1310 142" stroke="#777" stroke-width="1.5" fill="none"/>
<path d="M1295 115 L1316 134" stroke="#999" stroke-width="1.1" fill="none" stroke-dasharray="3 2"/>
<circle cx="1316" cy="134" r="2.1" fill="#5c5c5c"/>
<circle cx="1306" cy="124" r="1.6" fill="#999"/>
<path d="M1350 124 C1343 114 1327 117 1326 130 C1325.500 137 1331 141 1337 142" stroke="#5c5c5c" stroke-width="1.7" fill="none"/>
<path d="M1344 128 C1339 122 1331 124 1331.500 131" stroke="#666" stroke-width="1.5" fill="none"/>
<circle cx="1338.5" cy="129.5" r="2" fill="#999"/>
<path d="M1366 141 C1376 137 1382 128 1381 118 C1374 118 1367 121 1364 127" stroke="#777" stroke-width="1.3" fill="none"/>
<circle cx="1369.5" cy="129.5" r="2.2" fill="#5c5c5c"/>
<path d="M1411 119 L1414 117 L1417 119 L1420 117 L1423 119 L1424 127 L1422 134 L1423 141 H1408 L1410 133 L1409 126 Z" stroke="#d2d2d2" stroke-width="1" fill="#f6f6f6"/>
<path d="M1427 129 h4.500 v4 h4 v4.500 h-4 v4 h-4.500 v-4 h-4 v-4.500 h4 z" fill="#c6c6c6"/>
<path d="M1447 138 L1451 127 L1459 119 L1465 125 L1457 133 Z M1447 138 L1455 130 M1457 117 L1467 127" stroke="#5c5c5c" stroke-width="1.6" fill="none"/>
<circle cx="1456" cy="129" r="1.600" fill="none" stroke="#5c5c5c" stroke-width="1"/>
<circle cx="1445.5" cy="139.5" r="1.5" fill="#5c5c5c"/>
<path d="M1478 131 L1487 121 C1490 118 1495 123 1492 126 L1483 136 C1480 139 1475 134 1478 131 Z M1484 133 L1492 124" stroke="#666" stroke-width="1.7" fill="none"/>
<circle cx="1494.500" cy="136.500" r="5.300" fill="#f0f0f0" stroke="#555" stroke-width="1.700"/>
<path d="M1491.500 136.500 h6 M1494.500 133.500 v6" stroke="#555" stroke-width="1.8" fill="none"/>
<path d="M1510 118 C1520 121 1525 121 1534 117 C1531 126 1531 132 1534 141 C1525 137 1519 137 1510 141 C1513 132 1513 126 1510 118 Z M1510 141 L1534 117" stroke="#666" stroke-width="1.4" fill="none"/>
<circle cx="1510" cy="118" r="1.9" fill="#5c5c5c"/>
<circle cx="1534" cy="117" r="1.9" fill="#5c5c5c"/>
<circle cx="1534" cy="141" r="1.9" fill="#5c5c5c"/>
<circle cx="1510" cy="141" r="1.9" fill="#5c5c5c"/>
<path d="M1556 121 H1573 V126 C1580 124 1584 131 1580 136 C1576 139 1570 137 1569 132 H1556 Z" stroke="#999" stroke-width="1.3" fill="#f6f6f6"/>
<path d="M1602 121 H1595 C1593 121 1592 122 1592 124 V136 C1592 138 1593 139 1595 139 H1608 C1610 139 1611 138 1611 136 V131" stroke="#555" stroke-width="2.4" fill="none"/>
<path d="M1600 132 C1600 125 1604 122.500 1608 122.500 V119 L1614.500 124.500 L1608 130 V126.500 C1605 126.500 1602 128 1600 132 Z" fill="#9a9a9a"/>
<path d="M1642 117 H1655 V122 H1642 Z M1638 123 H1659 C1660.500 123 1661 124 1661 125 V133 H1656 V129 H1641 V133 H1637 V125 C1637 124 1637.500 123 1638 123 Z" fill="#111"/><path d="M1642.500 131 H1654.500 V139 H1642.500 Z" fill="#f0f0f0" stroke="#111" stroke-width="1.600"/>
<circle cx="1656" cy="135.500" r="4.300" fill="#f0f0f0" stroke="#3f7fe0" stroke-width="2.200" stroke-dasharray="1.700 1"/><circle cx="1656" cy="135.500" r="3.100" fill="none" stroke="#3f7fe0" stroke-width="1.500"/>
<path d="M1683 121 H1676 C1674 121 1673 122 1673 124 V136 C1673 138 1674 139 1676 139 H1689 C1691 139 1692 138 1692 136 V131" stroke="#111" stroke-width="2.6" fill="none"/>
<path d="M1681 132 C1681 125 1685 122.500 1689 122.500 V119 L1695.500 124.500 L1689 130 V126.500 C1686 126.500 1683 128 1681 132 Z" fill="#f03a1f"/>
<path d="M1723 122 H1738 V138 H1723 Z" stroke="#222" stroke-width="2" fill="none"/>
<circle cx="1738.500" cy="121" r="3.300" fill="#f0f0f0" stroke="#2f6fd0" stroke-width="1.500"/><circle cx="1722.500" cy="137.500" r="3.300" fill="#f0f0f0" stroke="#2f6fd0" stroke-width="1.500"/>
<path d="M1754 140 C1754 124 1758 116 1762 124 C1766 134 1768 136 1770 130 L1775 121" stroke="#9a9a9a" stroke-width="1.5" fill="none"/>
<path d="M1753 118 H1764 M1770 140 L1775 121" stroke="#aaa" stroke-width="1" fill="none"/>
<circle cx="1754" cy="140" r="1.5" fill="#aaa"/>
<circle cx="1753" cy="118" r="1.5" fill="#aaa"/>
<circle cx="1764" cy="118" r="1.5" fill="#aaa"/>
<circle cx="1770" cy="140" r="1.5" fill="#aaa"/>
<circle cx="1775" cy="121" r="1.5" fill="#aaa"/>
<path d="M1787 129 H1810 M1798.500 117.500 V140.500" stroke="#111" stroke-width="2" fill="none"/>
<circle cx="1798.500" cy="129" r="4.800" fill="none" stroke="#2f6fd0" stroke-width="2"/>
<path d="M1833 120 V138" stroke="#444" stroke-width="1.5" fill="none"/>
<path d="M1833 116.500 l3.200 5 h-6.400 z M1833 141.500 l3.200 -5 h-6.400 z" fill="#444"/>
<circle cx="1833" cy="129" r="1.3" fill="#999"/>
<path d="M1858 131 L1868 119.500 L1877 118 C1879 118 1880 119 1879.500 121 L1878 130 L1867 141 C1866 142 1865 142 1864 141 L1858 134 C1857 133 1857 132 1858 131 Z" fill="#8f8f8f"/><circle cx="1874" cy="123.500" r="1.800" fill="#f0f0f0"/>
</g>
<!-- ===== toolbar 3 ===== -->
<g id="tb3i">
<path d="M8.5 150 V181" stroke="#c6c6c6" stroke-width="1"/><path d="M9.5 150 V181" stroke="#fbfbfb" stroke-width="1"/>
<path d="M249.5 150 V181" stroke="#c6c6c6" stroke-width="1"/><path d="M250.5 150 V181" stroke="#fbfbfb" stroke-width="1"/>
<rect x="17" y="154.300" width="23" height="23" fill="none" stroke="#777" stroke-width="1" stroke-dasharray="1 1.200"/>
<circle cx="17" cy="154.3" r="2" fill="#999"/>
<circle cx="40" cy="154.3" r="2" fill="#999"/>
<circle cx="17" cy="177.3" r="2" fill="#999"/>
<circle cx="40" cy="177.3" r="2" fill="#999"/>
<rect x="20.400" y="158" width="9.300" height="9.300" fill="#555"/><rect x="27" y="164.300" width="9.300" height="9" fill="#5a5a5a" stroke="#f0f0f0" stroke-width="0.800"/>
<path d="M56 174.500 A10.600 10.600 0 1 0 55 158" stroke="#555" stroke-width="3.3" fill="none"/>
<path d="M48.500 157.500 L58.500 156.500 L55.500 163.500 L50 166.500 Z" fill="#555"/>
<circle cx="63.3" cy="166.3" r="2.3" fill="#888"/>
<path d="M84 153.800 H109 V177.800 H84 Z" stroke="#777" stroke-width="1.3" fill="none"/>
<path d="M84.500 175 L106 153.800 M87 177.800 L109 156" stroke="#5c5c5c" stroke-width="2" fill="none"/>
<circle cx="85" cy="177" r="2.1" fill="#5c5c5c"/>
<circle cx="108" cy="154.7" r="2.1" fill="#5c5c5c"/>
<path d="M118.500 177.500 L126.500 154 V177.500 Z" stroke="#5c5c5c" stroke-width="1.9" fill="none"/>
<path d="M130.400 152.500 V179" stroke="#444" stroke-width="1.4" fill="none" stroke-dasharray="2 1.600"/>
<circle cx="130.4" cy="165" r="1.8" fill="#444"/>
<path d="M134.300 154 L143 177.500 H134.300 Z" stroke="#777" stroke-width="1.1" fill="none"/>
<circle cx="154.4" cy="175.8" r="3.5" fill="#555"/>
<path d="M156 174 L167 163" stroke="#555" stroke-width="3.6" fill="none"/>
<path d="M173 157 L171 169 L161.500 159.500 Z" fill="#555"/>
<circle cx="174.7" cy="155.5" r="2.5" fill="#999"/>
<path d="M187 159.500 C193 156 202 154.500 209.800 154.300" stroke="#5c5c5c" stroke-width="1.5" fill="none"/>
<path d="M199 155 C200 163 201 170 201.400 177.300 M196.500 156.500 C198.500 164 200 171 201.400 177.300" stroke="#777" stroke-width="1.3" fill="none"/>
<circle cx="187" cy="159.5" r="2.1" fill="#5c5c5c"/>
<circle cx="209.8" cy="154.3" r="2.1" fill="#5c5c5c"/>
<circle cx="201.4" cy="177.3" r="2.1" fill="#5c5c5c"/>
<path d="M231 159.500 H225 C223 159.500 222.200 160.500 222.200 162.500 V171 C222.200 173 223 174 225 174 H234.500 C236.500 174 237.500 173 237.500 171 V167" stroke="#555" stroke-width="2.5" fill="none"/>
<path d="M230 167 C230 161 233.500 158.500 237.500 158.500 V155.500 L243.500 160.300 L237.500 165 V162 C234.500 162 232 163.500 230 167 Z" fill="#9a9a9a"/>
<rect x="262.500" y="156.500" width="205.500" height="19" fill="#fff" stroke="#c6c6c6" stroke-width="1"/><path d="M455 164 l3.500 3.500 l3.500 -3.500" fill="none" stroke="#555" stroke-width="1.100"/>
<rect x="468.500" y="156.500" width="40.500" height="19" fill="#e2e2e2" stroke="#c6c6c6" stroke-width="1"/><path d="M495.500 164 l3.500 3.500 l3.500 -3.500" fill="none" stroke="#666" stroke-width="1.100"/>
<g font-family="'DejaVu Sans Condensed','DejaVu Sans','Liberation Sans',sans-serif" font-size="11.800" fill="#000"><text x="267.500" y="170" textLength="76.5" lengthAdjust="spacingAndGlyphs">MS Shell Dlg 2</text><text x="473" y="170" textLength="13.5" lengthAdjust="spacingAndGlyphs">32</text></g>
<path d="M514.500 166 C520 155.500 534 155.500 539 166 C534 176 520 176 514.500 166 Z" fill="none" stroke="#333" stroke-width="2.600"/><circle cx="527" cy="165" r="5.600" fill="#3a3a3a"/><circle cx="524.500" cy="162.800" r="1.900" fill="#f0f0f0"/>
<g font-family="'DejaVu Sans Condensed','DejaVu Sans','Liberation Sans',sans-serif" fill="#000" font-weight="bold"><text x="550.500" y="175.200" font-size="25.800" textLength="14.500" lengthAdjust="spacingAndGlyphs">A</text><text x="586.500" y="175.200" font-size="20" textLength="13" lengthAdjust="spacingAndGlyphs">A</text><text x="616.800" y="178" font-size="9.800" fill="#666" font-weight="normal" textLength="8" lengthAdjust="spacingAndGlyphs">A</text></g>
<path d="M564.600 161 l3.300 -3.800 l3.300 3.800 z M598.300 156.400 l3.500 3.400 l3.500 -3.400 z" fill="#2f6fd0"/>
<path d="M631.500 155.500 L640 164 L631 173 L622.500 165 Z" fill="#cdcdcd"/><path d="M620.500 171 C619.500 164 622 160.500 626.500 160.500" stroke="#8a8a8a" stroke-width="1.800" fill="none"/><path d="M632.500 153.500 L630 163" stroke="#444" stroke-width="1.200"/><circle cx="630" cy="163.300" r="1.400" fill="#444"/>
</g>
<!-- embedded drawing -->
<g id="dwg" fill="none">
<g stroke="#a9c2ea" stroke-width="0.85">
<path d="M133 425 H424.3"/><path d="M424.3 217 V253"/><path d="M383 759 H424.3 V685"/>
</g>
<g stroke="#888" stroke-width="0.8"><path d="M99 412 L131 424"/><path d="M426 253 L437 252"/><path d="M427 683 L441 674"/></g>
<path d="M240.5 216.8 C239.8 219.4 239.8 226.3 236.4 232.5 C233.0 238.7 227.4 245.9 220.2 254 C213.0 262.1 201.4 272.2 193 281 C184.6 289.8 177.2 297.1 170 307 C162.8 316.9 155.4 327.9 149.9 340.7 C144.4 353.5 139.7 369.9 136.9 384 C134.1 398.1 132.9 413.0 133 425 C133.1 437.0 135.0 446.7 137.2 456 C139.4 465.3 141.8 470.9 146.3 481 C150.8 491.1 156.4 502.8 164.2 516.4 C171.9 530.0 186.0 551.1 192.8 562.5 C199.6 573.9 201.9 578.9 205 585 C208.1 591.1 208.6 592.4 211.3 599 C214.0 605.6 217.7 613.3 221.4 624.6 C225.1 635.9 230.2 651.4 233.3 666.7 C236.4 682.1 238.5 701.3 240 716.7 C241.5 732.1 241.9 752.0 242.3 759" stroke="#000" stroke-width="2"/>
<path d="M176.5 304.5 L169 308.5 L170 300" stroke="#000" stroke-width="1.6"/>
<path d="M198.5 583 L205.3 586.2 L206.3 578.5" stroke="#000" stroke-width="1.3"/>
<path d="M380 217 L221.7 623 C228 650 234 690 238 725 L242 759" stroke="#e800e8" stroke-width="1.6" stroke-dasharray="9 3"/>
<path d="M382.3 217 L242.3 759 H383.3 C405 759 424.3 745 424.3 685 V253 C424.3 232 418 222 406.7 217" stroke="#e2142a" stroke-width="1.7"/>
<g stroke="#566070" stroke-width="0.85"><circle cx="424.3" cy="253" r="3"/><circle cx="424.3" cy="425" r="3"/><circle cx="133" cy="425" r="3"/><circle cx="383.3" cy="759" r="3"/><circle cx="424.3" cy="759" r="3"/></g>
<g stroke="#b0007a" stroke-width="1.4"><circle cx="424.3" cy="685" r="3"/><circle cx="242.3" cy="759" r="3.2"/></g>
</g>
<g font-family="'DejaVu Sans Condensed','DejaVu Sans','Liberation Sans',sans-serif" font-size="20.2" fill="#000">
<text x="426.6" y="237.3" textLength="12.4" lengthAdjust="spacingAndGlyphs">A</text><text x="438.2" y="259.3" textLength="24.0" lengthAdjust="spacingAndGlyphs">A2</text><text x="426.3" y="450.3" textLength="11.5" lengthAdjust="spacingAndGlyphs">E</text><text x="89" y="420.2" textLength="10.5" lengthAdjust="spacingAndGlyphs">F</text><text x="443.2" y="677.5" textLength="24.0" lengthAdjust="spacingAndGlyphs">B2</text><text x="243.3" y="784" textLength="12.7" lengthAdjust="spacingAndGlyphs">C</text><text x="359.6" y="783.8" textLength="24.0" lengthAdjust="spacingAndGlyphs">B1</text><text x="426.6" y="784" textLength="12.5" lengthAdjust="spacingAndGlyphs">B</text>
</g>
<!-- purple dash-dot arc -->
<g filter="url(#sh)" fill="none" stroke="#5d2694" stroke-width="14.5">
<path d="M268 236.8 Q288 238 306.300 246.200"/>
<path d="M320.600 255.500 L333.400 264.500"/>
<path d="M346.700 276 Q362.500 292 374.500 312"/>
<path d="M383.100 327.300 L390.100 340.700"/>
<path d="M396.600 358.400 Q404 378.500 408 400"/>
<path d="M411.300 419.500 L412.600 434.500"/>
<path d="M413 451.500 Q413 475 408 497.800"/>
<path d="M402.900 513.200 L396.900 528"/>
<circle cx="268" cy="236.800" r="7.250" fill="#5d2694" stroke="none"/>
<path d="M377.900 515.800 L411.900 546.700 L363.200 566.800 Z" fill="#5d2694" stroke="none"/>
</g>
<!-- magnifier callout -->
<g fill="none" stroke="#ecb53a" stroke-width="1.7">
<rect x="35.5" y="484.7" width="92.3" height="82.4" rx="9" fill="#fff"/>
<rect x="179" y="562.6" width="42" height="36.5" rx="5.5"/>
<path d="M128.3 548 L179 570.5"/>
</g>
<g fill="none" stroke="#000" stroke-width="5"><path d="M66.75 485.7 L105.4 566"/><path d="M80.3 532 L93 538.5 L96 524.3" stroke-width="3.8" stroke-linecap="round"/></g>
<!-- tooltip -->
<rect x="225.500" y="669" width="140" height="46" fill="#000" opacity="0.13"/><rect x="224.500" y="668" width="140" height="46" fill="#000" opacity="0.1"/><rect x="223.5" y="666.5" width="140" height="46" fill="#fff" stroke="#a3a3a3" stroke-width="1"/>
<g font-family="'DejaVu Sans Condensed','DejaVu Sans','Liberation Sans',sans-serif" font-size="13.1" fill="#575757">
<text x="231.5" y="684" textLength="119.7" lengthAdjust="spacingAndGlyphs"><tspan font-weight="bold">Name:</tspan> SplPath_D_C</text>
<text x="231.5" y="705" textLength="110.2" lengthAdjust="spacingAndGlyphs"><tspan font-weight="bold">Length:</tspan> 36.87 cm</text>
</g>
<!-- layout piece on paper -->
<g id="piece" fill="none" stroke="#000" stroke-width="2">
<path d="M1210.6 618.1 L1210.6 478 C1210.6 440 1226 426 1262 426 L1715 426 C1765 426 1785.5 440 1785.5 480 L1785.5 616.3 C1779.6 616.4 1762.2 616.5 1750 617.2 C1737.8 617.9 1725.0 618.6 1712.5 620.3 C1700.0 622.0 1687.5 624.2 1675 627.5 C1662.5 630.8 1650.0 635.0 1637.5 640 C1625.0 645.0 1612.5 650.7 1600 657.2 C1587.5 663.7 1574.5 672.0 1562.5 679 C1550.5 686.0 1539.5 693.1 1528 699.4 C1516.5 705.7 1504.7 711.9 1493.75 716.6 C1482.8 721.3 1472.9 725.0 1462.5 727.5 C1452.1 730.0 1442.7 731.4 1431.25 731.4 C1419.8 731.4 1405.2 729.7 1393.75 727.5 C1382.3 725.3 1373.0 722.4 1362.5 718 C1352.0 713.6 1340.9 707.2 1331 701 C1321.1 694.8 1311.8 687.9 1303 680.6 C1294.2 673.3 1286.3 664.8 1278 657.2 C1269.7 649.7 1260.8 641.0 1253 635.3 C1245.2 629.6 1238.1 625.7 1231 622.8 C1223.9 619.9 1214.0 618.9 1210.6 618.1 Z"/>
</g>
<g font-family="'DejaVu Sans Condensed','DejaVu Sans','Liberation Sans',sans-serif" fill="#000" text-anchor="end" stroke="#000" stroke-width="0.3">
<text transform="translate(1222,438) rotate(-90)" font-size="10.4" textLength="85.1" lengthAdjust="spacingAndGlyphs">Spartan Undersuit</text>
<text transform="translate(1235,438) rotate(-90)" font-size="10.1" textLength="77.8" lengthAdjust="spacingAndGlyphs">Created for: Clint</text>
<text transform="translate(1248,438) rotate(-90)" font-size="10.1" textLength="174.0" lengthAdjust="spacingAndGlyphs">Using measurement: "measurements"</text>
<text transform="translate(1339,458) rotate(-90)" font-size="14.2" textLength="166.7" lengthAdjust="spacingAndGlyphs">Piece 'A' (Calf outer plate)</text>
<text transform="translate(1357,458) rotate(-90)" font-size="14.2" textLength="92.6" lengthAdjust="spacingAndGlyphs">Cut 2, Flip one</text>
<text transform="translate(1374,462) rotate(-90)" font-size="14.2" textLength="34.5" lengthAdjust="spacingAndGlyphs">Note:</text>
</g>
<!-- red arrows -->
<g filter="url(#sh2)" stroke="#f64545" fill="#f64545" stroke-width="4.8">
<path d="M444 364 L409 362.5"/><path d="M397.5 362 L410.5 355.3 L410 369 Z" stroke="none"/>
<path d="M582 760 L487.500 795.500"/><path d="M476 800.800 L486.500 789.800 L491.500 802.500 Z" stroke="none"/>
<path d="M994 869.500 L840 860"/><path d="M828 859.400 L841.300 852.800 L841 867.200 Z" stroke="none"/>
</g>
</svg>
</body>
</html>
